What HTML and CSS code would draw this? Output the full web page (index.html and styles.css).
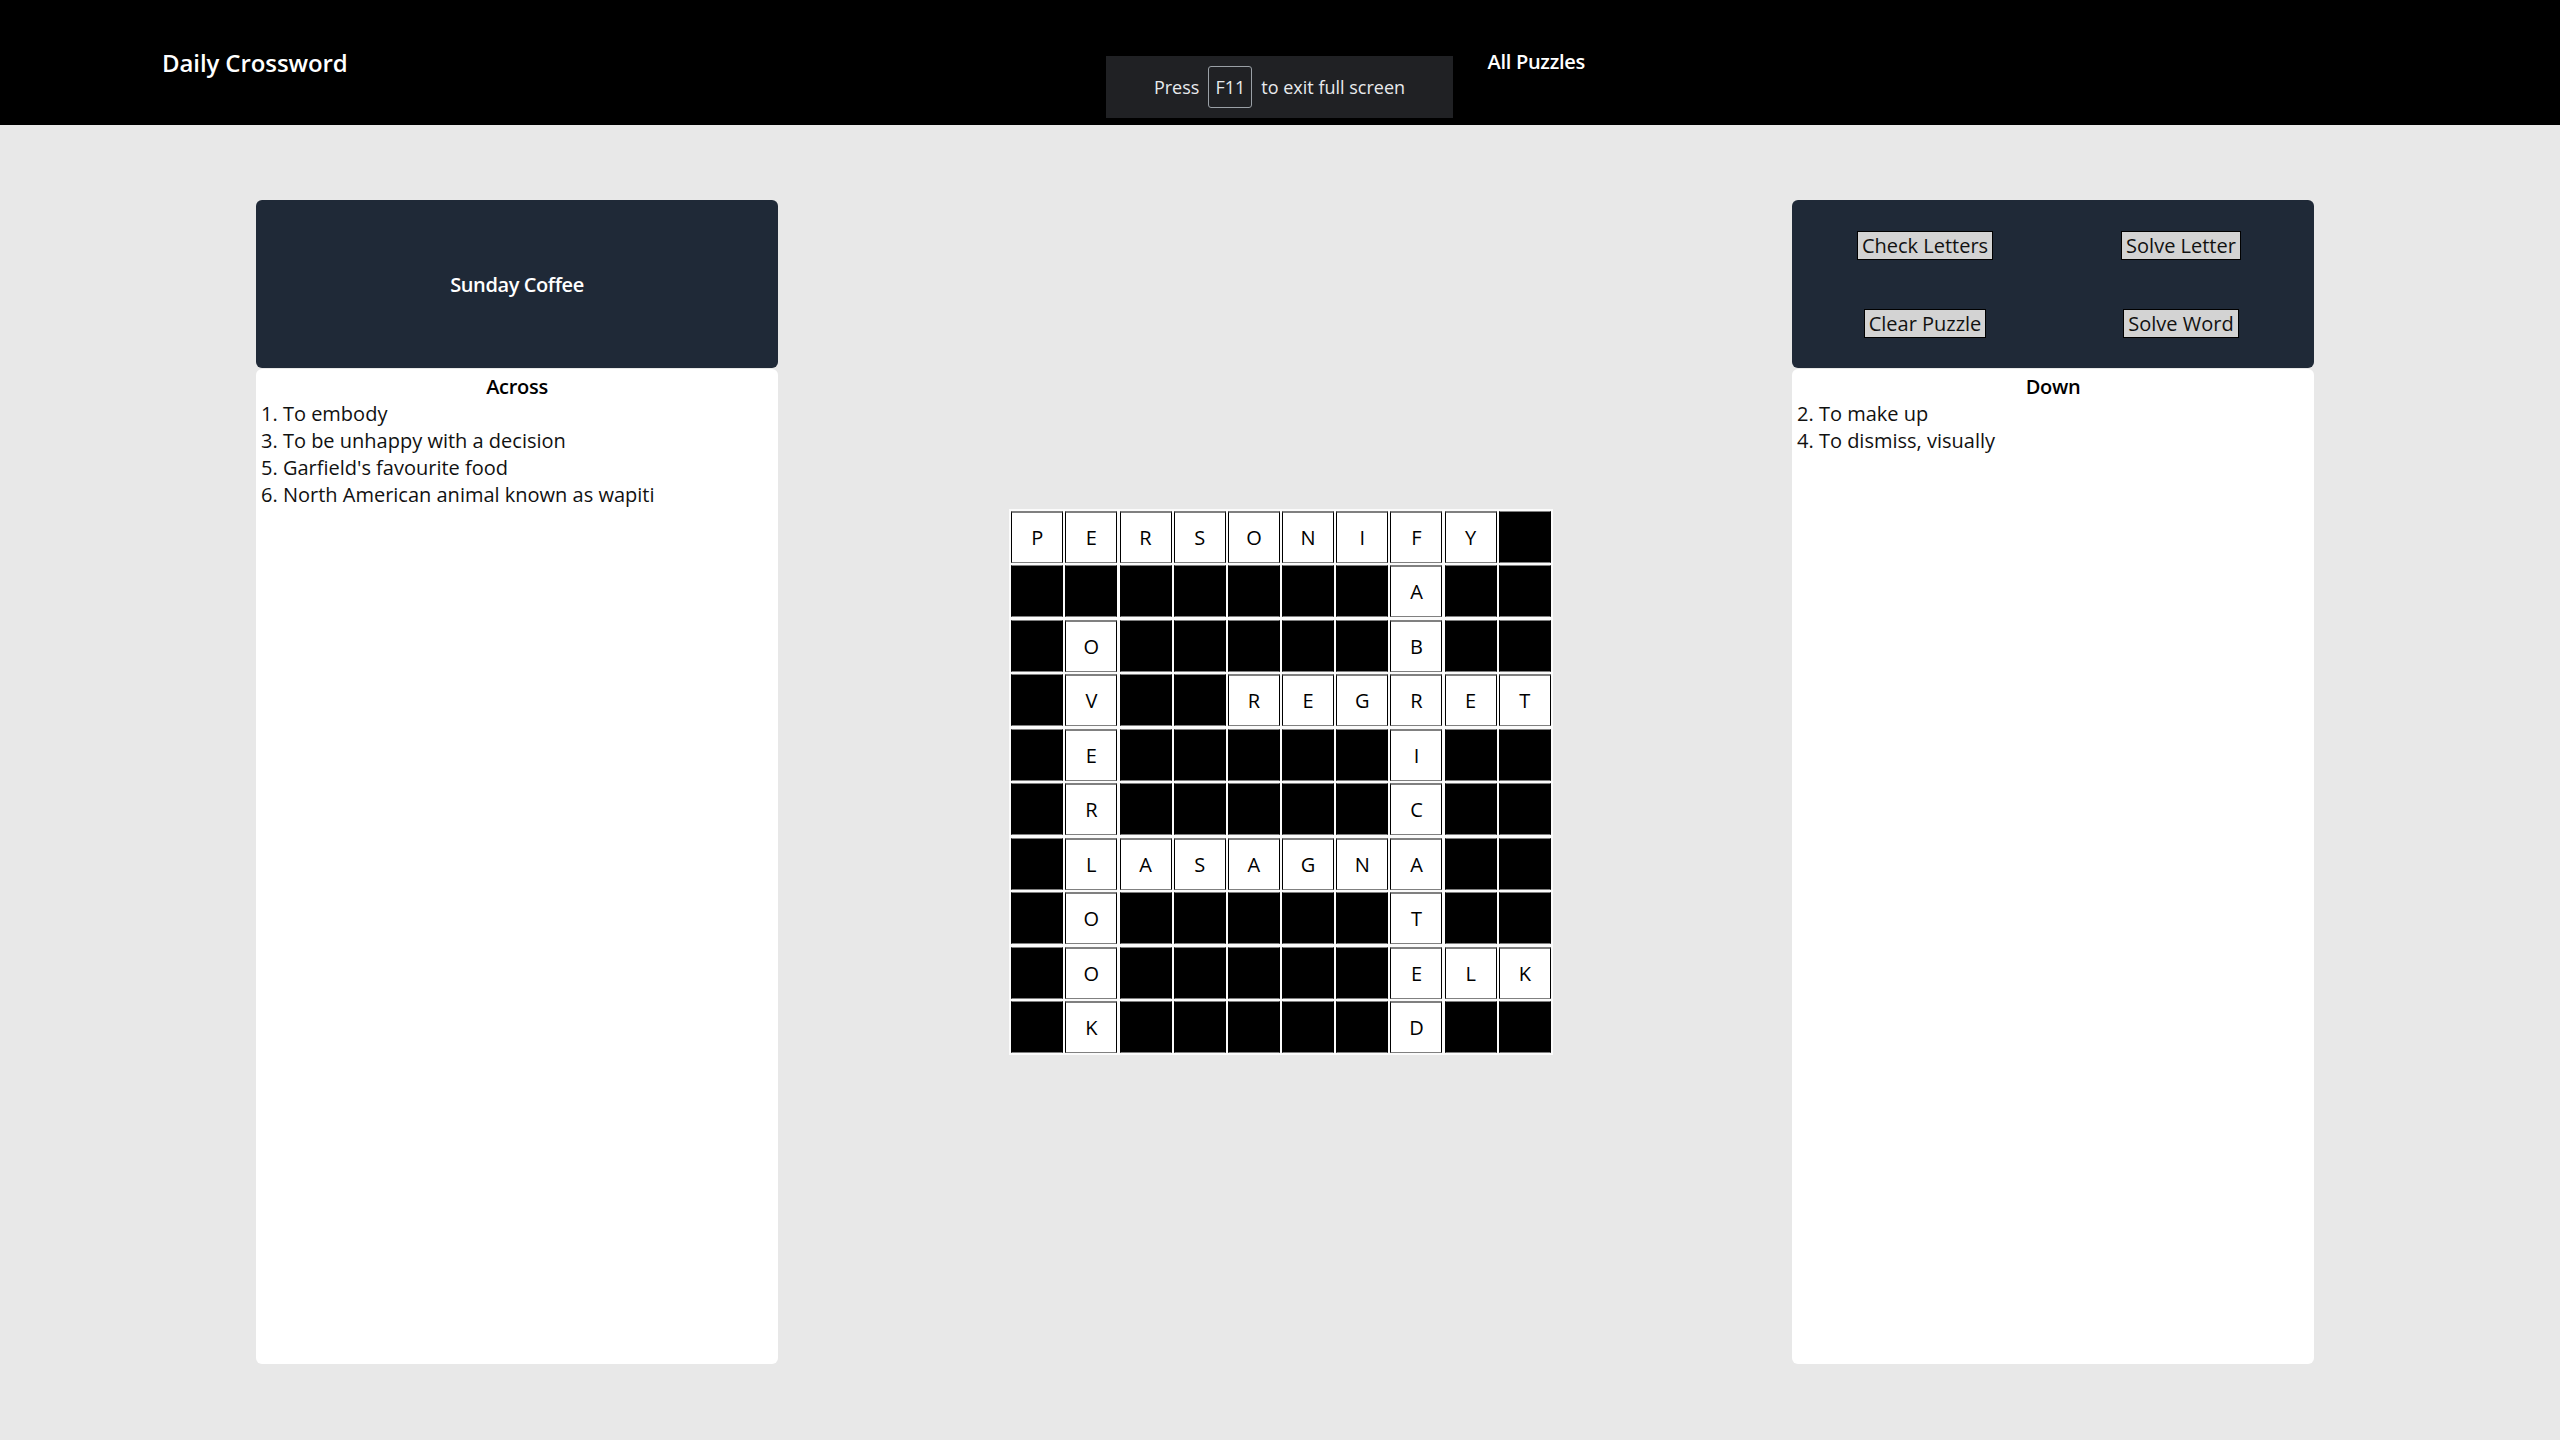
FILE: index.html
```html
<!DOCTYPE html>
<html lang="en">
<head>
<meta charset="utf-8">
<title>Daily Crossword</title>
<link rel="stylesheet" href="styles.css">
</head>
<body>
<header class="topbar">
  <div class="brand">Daily Crossword</div>
  <nav class="nav"><a class="nav-link" href="#">All Puzzles</a></nav>
</header>
<div class="fs-bubble">Press <span class="kbd">F11</span> to exit full screen</div>
<main class="main">
  <section class="panel">
    <div class="panel-head title-head">Sunday Coffee</div>
    <div class="panel-body">
      <div class="clue-title">Across</div>
      <div class="clue">1. To embody</div>
      <div class="clue">3. To be unhappy with a decision</div>
      <div class="clue">5. Garfield's favourite food</div>
      <div class="clue">6. North American animal known as wapiti</div>
    </div>
  </section>
  <section class="center">
    <div class="grid" id="grid"></div>
  </section>
  <section class="panel">
    <div class="panel-head controls">
      <button class="btn">Check Letters</button>
      <button class="btn">Solve Letter</button>
      <button class="btn">Clear Puzzle</button>
      <button class="btn">Solve Word</button>
    </div>
    <div class="panel-body">
      <div class="clue-title">Down</div>
      <div class="clue">2. To make up</div>
      <div class="clue">4. To dismiss, visually</div>
    </div>
  </section>
</main>
<script src="script.js"></script>
</body>
</html>
```
FILE: styles.css
```css
* { box-sizing: border-box; }
html, body { margin: 0; padding: 0; }
body {
  background: #e8e8e8;
  font-family: "Open Sans", "DejaVu Sans", sans-serif;
  color: #000;
  width: 2560px;
  height: 1440px;
  overflow: hidden;
}
.topbar {
  height: 125px;
  background: #000;
  display: flex;
  align-items: center;
  padding-left: 162px;
}
.brand {
  color: #fff;
  font-size: 24px;
  font-weight: 600;
  letter-spacing: -0.1px;
}
.nav { margin-left: 1140px; margin-top: -2px; }
.nav-link {
  color: #fff;
  font-size: 20px;
  font-weight: 600;
  text-decoration: none;
  letter-spacing: -0.3px;
}
.fs-bubble {
  position: absolute;
  left: 1106px;
  top: 56px;
  width: 347px;
  height: 62px;
  background: #202124;
  color: #e8eaed;
  font-size: 18px;
  display: flex;
  align-items: center;
  justify-content: center;
  gap: 9px;
  padding-top: 0;
}
.kbd {
  display: inline-flex;
  align-items: center;
  justify-content: center;
  width: 44px;
  height: 42px;
  border: 1px solid #9aa0a6;
  border-radius: 3px;
}
.main {
  display: grid;
  grid-template-columns: 522px 1fr 522px;
  height: 1315px;
  padding: 75px 246px 76px 256px;
}
.panel {
  display: flex;
  flex-direction: column;
  gap: 1px;
}
.panel-head {
  height: 168px;
  background: #1f2937;
  border-radius: 6px;
  color: #fff;
  flex: none;
}
.title-head {
  display: flex;
  align-items: center;
  justify-content: center;
  font-size: 20px;
  font-weight: 600;
  letter-spacing: -0.4px;
}
.controls {
  display: grid;
  grid-template-columns: 1fr 1fr;
  grid-template-rows: 78px 78px;
  padding: 6px 5px;
  align-items: center;
  justify-items: center;
}
.btn {
  font-family: "Open Sans", "DejaVu Sans", sans-serif;
  font-size: 20px;
  line-height: normal;
  padding: 0 4px;
  background: #d3d3d3;
  border: 1px solid #000;
  border-radius: 0;
  color: #111;
}
.panel-body {
  flex: 1;
  background: #fff;
  border-radius: 6px;
  padding: 4px 5px;
  font-size: 20px;
}
.clue-title {
  text-align: center;
  font-weight: 600;
  letter-spacing: -0.3px;
}
.clue { color: #111; }
.center {
  display: flex;
  align-items: center;
  justify-content: center;
  padding-right: 8px;
}
.grid {
  display: grid;
  grid-template-columns: repeat(10, 52px);
  grid-auto-rows: 52.3px;
  gap: 2.2px;
  padding: 2px;
  background: #fbfbfb;
}
.cell {
  background: #fff;
  border-top: 2px solid #808080;
  border-bottom: 1px solid #808080;
  border-left: 1px solid #000;
  border-right: 1px solid #000;
  display: flex;
  align-items: center;
  justify-content: center;
  font-size: 20px;
  color: #000;
}
.cell.block {
  background: #000;
  border-top: 1px solid #808080;
}
```
FILE: script.js
```js
const rows = [
  "PERSONIFY#",
  "#######A##",
  "#O#####B##",
  "#V##REGRET",
  "#E#####I##",
  "#R#####C##",
  "#LASAGNA##",
  "#O#####T##",
  "#O#####ELK",
  "#K#####D##"
];
const grid = document.getElementById("grid");
rows.forEach(r => {
  for (const ch of r) {
    const d = document.createElement("div");
    d.className = ch === "#" ? "cell block" : "cell";
    if (ch !== "#") d.textContent = ch;
    grid.appendChild(d);
  }
});
```
